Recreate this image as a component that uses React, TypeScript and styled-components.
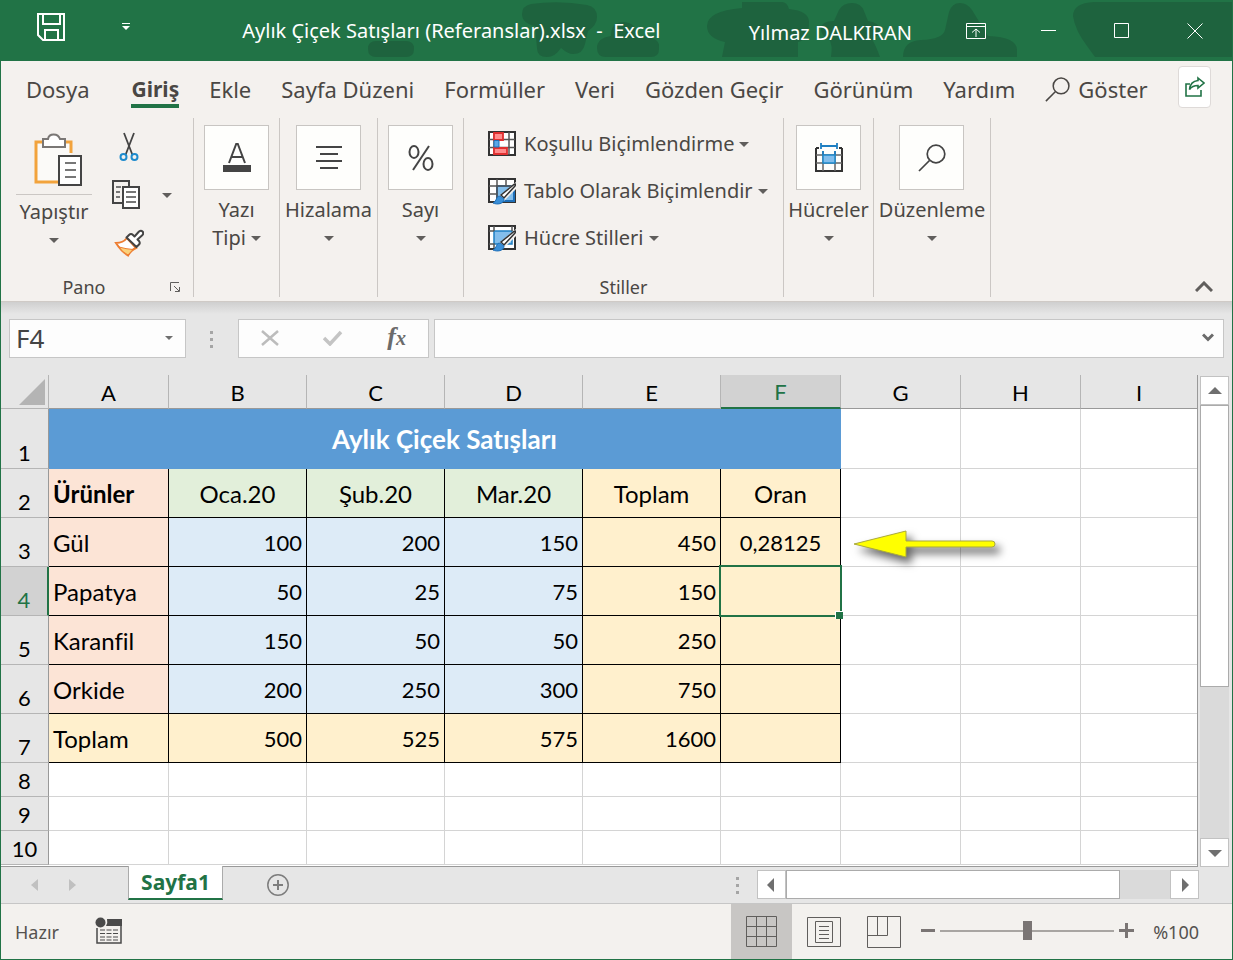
import React from "react";
import styled, { createGlobalStyle, css } from "styled-components";

const green = "#217346";
const ui = `"Noto Sans", "Open Sans", sans-serif`;
const cellFont = `Lato, "Noto Sans", sans-serif`;

const Global = createGlobalStyle`
  *, *::before, *::after { box-sizing: border-box; }
  body { margin: 0; font-family: ${ui}; color: #4a4744; background: #e6e6e6; }
  button { border: 0; padding: 0; margin: 0; background: none; font: inherit; color: inherit; cursor: pointer; }
  svg { display: block; flex: none; }
`;

const Window = styled.div`
  display: flex;
  flex-direction: column;
  min-height: 100vh;
  border: 1px solid ${green};
  border-top: 0;
`;

/* ---------- title bar ---------- */

const TitleBar = styled.header`
  position: relative;
  display: flex;
  align-items: center;
  height: 61px;
  padding-right: 1px;
  overflow: hidden;
  background: ${green};
  color: #fff;
`;

const TitleArt = styled.svg`
  position: absolute;
  top: 0;
  right: 0;
  fill: #1e633e;
`;

const TitleGroup = styled.div<{ $grow?: boolean }>`
  position: relative;
  display: flex;
  align-items: center;
  justify-content: ${(p) => (p.$grow ? "center" : "flex-start")};
  flex: ${(p) => (p.$grow ? "1" : "none")};
  white-space: pre;
  font-size: 20px;
  line-height: 28px;
`;

const QuickAccess = styled(TitleGroup)`
  gap: 56px;
  width: 153px;
  padding: 0 0 8px 35px;
`;

const User = styled(TitleGroup)`
  padding: 4px 27px 0 0;
`;

const WindowButton = styled.button`
  display: flex;
  align-items: center;
  justify-content: center;
  width: 73px;
  height: 60px;
`;

/* ---------- ribbon tabs ---------- */

const Tabs = styled.nav`
  display: flex;
  align-items: center;
  height: 57px;
  padding: 0 21px 0 25px;
  background: #f4f1ee;
  font-size: 22px;
  line-height: 30px;
  white-space: nowrap;
`;

const TabLinks = styled.div`
  display: flex;
  flex: 1;
  align-items: center;
  gap: 30px;
  padding-bottom: 1px;
`;

const Tab = styled.a<{ $active?: boolean; $first?: boolean }>`
  color: inherit;
  text-decoration: none;
  padding-top: 4px;
  border-bottom: 4px solid ${(p) => (p.$active ? green : "transparent")};
  font-size: ${(p) => (p.$active ? 21 : 22)}px;
  font-weight: ${(p) => (p.$active ? 700 : 400)};
  margin-right: ${(p) => (p.$first ? "12px" : "0")};
`;

const TellMe = styled.button`
  display: flex;
  align-items: center;
  gap: 8px;
`;

const ShareButton = styled.button`
  display: flex;
  align-items: center;
  justify-content: center;
  width: 33px;
  height: 42px;
  margin-bottom: 5px;
  background: #fff;
  border: 1px solid #dedad8;
  border-radius: 4px;
`;

/* ---------- ribbon ---------- */

const Ribbon = styled.section`
  display: flex;
  height: 184px;
  padding-bottom: 4px;
  background: #f4f1ee;
  border-bottom: 1px solid #cfcac6;
  font-size: 20px;
  line-height: 28px;
`;

const Group = styled.div<{ $width: number }>`
  display: flex;
  flex-direction: column;
  width: ${(p) => p.$width}px;
  border-right: 1px solid #cbc7c4;
`;

const GroupBody = styled.div`
  display: flex;
  flex: 1;
`;

const GroupCaption = styled.div`
  display: flex;
  align-items: center;
  justify-content: center;
  position: relative;
  height: 20px;
  padding-right: 26px;
  font-size: 18px;
  line-height: 20px;
`;

const StyleCaption = styled(GroupCaption)`
  padding-right: 0;
`;

const Launcher = styled.button`
  position: absolute;
  right: 12px;
  top: 5px;
`;

const PasteButton = styled.button`
  display: flex;
  flex-direction: column;
  align-items: center;
  width: 76px;
  margin-left: 15px;
  padding-top: 15px;
`;

const PasteLabel = styled.span`
  width: 100%;
  margin: 7px 0 12px;
  padding-top: 3px;
  border-top: 1px solid #cbc7c4;
`;

const ClipboardTools = styled.div`
  display: flex;
  flex-direction: column;
  gap: 18px;
  padding: 14px 0 0 20px;
`;

const Tool = styled.button`
  display: flex;
  align-items: center;
  gap: 22px;
  height: 30px;
`;

const BigButton = styled.button`
  display: flex;
  flex-direction: column;
  align-items: center;
  padding-top: 7px;
  white-space: nowrap;
`;

const Tile = styled.span`
  display: flex;
  align-items: center;
  justify-content: center;
  width: 65px;
  height: 65px;
  margin-bottom: 6px;
  background: #fefefc;
  border: 1px solid #c8c5c2;
`;

const LabelLine = styled.span`
  display: flex;
  align-items: center;
  gap: 5px;
  height: 28px;
`;

const CenterBody = styled(GroupBody)`
  justify-content: center;
  align-items: flex-start;
`;

const StyleList = styled.div`
  display: flex;
  flex-direction: column;
  gap: 19px;
  padding: 12px 0 0 24px;
`;

const StyleButton = styled.button`
  display: flex;
  align-items: center;
  gap: 8px;
  height: 28px;
  white-space: nowrap;
`;

const Collapse = styled.button`
  align-self: flex-end;
  margin: 0 19px 5px auto;
`;

/* ---------- formula bar ---------- */

const FormulaBar = styled.div`
  display: flex;
  align-items: center;
  height: 73px;
  padding: 0 8px;
  background: linear-gradient(#cfcfcf, #e6e6e6 12px);
`;

const boxed = css`
  display: flex;
  align-items: center;
  height: 39px;
  padding-bottom: 2px;
  background: #fdfdfd;
  border: 1px solid #c6c6c6;
`;

const NameBox = styled.div`
  ${boxed}
  width: 177px;
  padding-left: 6px;
  padding-right: 12px;
`;

const NameInput = styled.input`
  flex: 1;
  min-width: 0;
  border: 0;
  padding: 0;
  outline: 0;
  background: none;
  font: 26px/34px ${ui};
  color: #444;
`;

const Dots = styled.span`
  width: 52px;
  display: flex;
  justify-content: center;
`;

const FormulaButtons = styled.div`
  ${boxed}
  width: 191px;
  margin-right: 5px;
  justify-content: space-around;
`;

const FxButton = styled.button`
  font: italic bold 26px/30px "Liberation Serif", serif;
  color: #6b6b6b;
`;

const FxSub = styled.span`
  font-size: 20px;
`;

const FormulaField = styled.div`
  ${boxed}
  flex: 1;
  padding-right: 9px;
`;

/* ---------- sheet ---------- */

const SheetArea = styled.main`
  display: flex;
  flex: 1;
  background: #e6e6e6;
`;

const SheetPane = styled.div`
  flex: 1;
  min-width: 0;
  overflow: hidden;
  padding-bottom: 1px;
  border-right: 1px solid #999;
  border-bottom: 1px solid #999;
  background: linear-gradient(#e6e6e6 34px, #fff 34px);
`;

const Grid = styled.table`
  width: 100%;
  table-layout: fixed;
  border-collapse: separate;
  border-spacing: 0;
  font: 22px/28px ${cellFont};
  font-variant-ligatures: none;
  color: #000;
`;

const Row = styled.tr<{ $h: number }>`
  height: ${(p) => p.$h}px;
`;

const ColHead = styled.th<{ $on?: boolean }>`
  padding: 2px 0 0;
  font-weight: 400;
  border-right: 1px solid #b5b5b5;
  border-bottom: ${(p) => (p.$on ? `2px solid ${green}` : "1px solid #999")};
  background: ${(p) => (p.$on ? "#d2d2d2" : "#e6e6e6")};
  color: ${(p) => (p.$on ? green : "#000")};
  &:last-child { border-right: 0; }
`;

const Corner = styled.td`
  padding: 0 3px 3px 0;
  vertical-align: bottom;
  border-right: 1px solid #b5b5b5;
  border-bottom: 1px solid #b5b5b5;
  background: #e6e6e6;
  svg { margin-left: auto; }
`;

const RowHead = styled.th<{ $on?: boolean }>`
  padding: 0;
  vertical-align: bottom;
  text-align: center;
  font-weight: 400;
  line-height: 30px;
  border-right: ${(p) => (p.$on ? `2px solid ${green}` : "1px solid #999")};
  border-bottom: 1px solid #b5b5b5;
  background: ${(p) => (p.$on ? "#d2d2d2" : "#e6e6e6")};
  color: ${(p) => (p.$on ? green : "#000")};
`;

const fills: Record<string, string> = {
  none: "#fff",
  pink: "#fce4d6",
  green: "#e2efda",
  blue: "#ddebf7",
  yellow: "#fff0cd",
  title: "#5b9bd5",
};

const Cell = styled.td<{ $fill?: string; $align?: string; $bold?: boolean; $text?: boolean }>`
  position: relative;
  padding: 1px 4px 0;
  white-space: nowrap;
  font-size: ${(p) => (p.$text ? 24 : 22)}px;
  text-align: ${(p) => p.$align || "right"};
  font-weight: ${(p) => (p.$bold ? 700 : 400)};
  background: ${(p) => fills[p.$fill || "none"]};
  border-right: 1px solid ${(p) => (p.$fill ? "#000" : "#d4d4d4")};
  border-bottom: 1px solid ${(p) => (p.$fill ? "#000" : "#d4d4d4")};
  &:last-child { border-right: 0; }
`;

const TitleCell = styled(Cell)`
  font-size: 26px;
  color: #fff;
  border-color: #5b9bd5;
`;

const Selection = styled.span`
  position: absolute;
  inset: -2px -2px -2px -2px;
  border: 2px solid ${green};
  z-index: 1;
  &::after {
    content: "";
    position: absolute;
    right: -3px;
    bottom: -4px;
    width: 8px;
    height: 8px;
    background: ${green};
    border: 1px solid #fff;
    border-width: 1px 0 0 1px;
  }
`;

const Arrow = styled.svg`
  position: absolute;
  left: 4px;
  top: 4px;
  z-index: 2;
`;

/* ---------- scroll bars ---------- */

const ScrollBar = styled.div<{ $row?: boolean }>`
  display: flex;
  flex-direction: ${(p) => (p.$row ? "row" : "column")};
  background: #dadada;
  ${(p) => (p.$row ? "width: 442px; height: 29px;" : "width: 29px; margin: 1px 3px 0 2px;")}
`;

const ScrollButton = styled.button`
  display: flex;
  flex: none;
  align-items: center;
  justify-content: center;
  width: 29px;
  height: 29px;
  background: #fff;
  border: 1px solid #c2c2c2;
`;

const Thumb = styled.div<{ $size: number }>`
  flex: ${(p) => p.$size};
  background: #fff;
  border: 1px solid #ababab;
`;

const Track = styled.div<{ $size: number }>`
  flex: ${(p) => p.$size};
`;

/* ---------- sheet tabs and status ---------- */

const SheetTabs = styled.div`
  display: flex;
  align-items: center;
  height: 37px;
  padding: 0 33px 1px 0;
  background: #e6e6e6;
  border-bottom: 1px solid #c6c6c6;
`;

const SheetNav = styled.div`
  display: flex;
  gap: 31px;
  width: 127px;
  padding-left: 30px;
`;

const SheetTab = styled.button`
  align-self: flex-start;
  width: 95px;
  height: 34px;
  margin-top: -1px;
  background: #fff;
  border: 1px solid #ababab;
  border-width: 0 1px 2px;
  border-bottom-color: ${green};
  color: ${green};
  font-size: 21px;
  font-weight: 700;
  line-height: 32px;
`;

const AddSheet = styled.button`
  margin-left: 43px;
`;

const HDots = styled.span`
  margin: 0 17px 0 auto;
`;

const StatusBar = styled.footer`
  display: flex;
  align-items: center;
  height: 55px;
  padding: 0 33px 0 14px;
  background: #f3f1ee;
  font-size: 18px;
  line-height: 24px;
  color: #55524f;
`;

const MacroButton = styled.button`
  margin: 0 auto 2px 36px;
`;

const ViewButton = styled.button<{ $on?: boolean }>`
  display: flex;
  align-items: center;
  justify-content: center;
  width: ${(p) => (p.$on ? 61 : 60)}px;
  height: 100%;
  padding-left: ${(p) => (p.$on ? 0 : 3)}px;
  background: ${(p) => (p.$on ? "#c8c6c4" : "transparent")};
`;

const ZoomControl = styled.div`
  display: flex;
  align-items: center;
  gap: 5px;
  margin: 0 19px 2px 8px;
`;

const Slider = styled.input`
  appearance: none;
  width: 174px;
  height: 20px;
  margin: 0;
  background: linear-gradient(#a8a5a2, #a8a5a2) center / 100% 2px no-repeat;
  &::-webkit-slider-thumb {
    appearance: none;
    width: 9px;
    height: 19px;
    background: #7a7574;
  }
`;

/* ---------- icons ---------- */

const Caret = () => (
  <svg width="10" height="5" viewBox="0 0 10 5"><path d="M0 0h10L5 5z" fill="#605e5c" /></svg>
);

const Tri = ({ d, color = "#6f6f6f", w = 14, h = 14 }: { d: string; color?: string; w?: number; h?: number }) => (
  <svg width={w} height={h} viewBox={`0 0 ${w} ${h}`}><path d={d} fill={color} /></svg>
);

const DotColumn = () => (
  <svg width="4" height="18" viewBox="0 0 4 18" fill="#a5a5a5">
    <rect y="1" width="3" height="3" /><rect y="8" width="3" height="3" /><rect y="15" width="3" height="3" />
  </svg>
);

const SaveIcon = () => (
  <svg width="30" height="30" viewBox="0 0 30 30" fill="none" stroke="#fff" strokeWidth="2">
    <path d="M2 2h26v26H7l-5-5zM7 2v10h17V2M9 28V18h13v10" />
  </svg>
);

const CustomizeIcon = () => (
  <svg width="8" height="8" viewBox="0 0 8 8" fill="#fff"><path d="M0 0h8v1H0zM0 3h8L4 7z" /></svg>
);

const Lens = ({ size, color }: { size: number; color: string }) => (
  <svg width={size} height={size} viewBox="0 0 28 28" fill="none" stroke={color} strokeWidth="1.7">
    <circle cx="18" cy="10" r="8.8" /><path d="M11.500 16.500L1 27" />
  </svg>
);

const ShareIcon = () => (
  <svg width="20" height="22" viewBox="0 0 20 22" fill="none" stroke={green} strokeWidth="1.6">
    <path d="M5 8H1v12h15v-6" /><path d="M13 2l6 5-6 5V9.500C9 9.500 6.500 10.500 4.500 13.500 5 8.500 8 5 13 4.500z" />
  </svg>
);

const PasteIcon = () => (
  <svg width="58" height="54" viewBox="-8 0 58 54" fill="none">
    <path d="M38 20V9H3v40h22" stroke="#f2a33c" strokeWidth="3" fill="#fbfaf8" />
    <path d="M10 6h5c1-6 10-6 12 0h5v8H10z" fill="#fff" stroke="#7a7775" strokeWidth="2" />
    <path d="M26 23h22v29H26z" fill="#fff" stroke="#444" strokeWidth="2" />
    <path d="M32 30h11M32 37h11M32 44h11" stroke="#777" strokeWidth="2" />
  </svg>
);

const ScissorsIcon = () => (
  <svg width="34" height="30" viewBox="-4 0 34 30" fill="none">
    <path d="M8 1l8.500 22M18 1L9.500 23" stroke="#444" strokeWidth="1.800" />
    <circle cx="7.500" cy="25" r="3" stroke="#1e8bcd" strokeWidth="2" />
    <circle cx="18.500" cy="25" r="3" stroke="#1e8bcd" strokeWidth="2" />
  </svg>
);

const CopyIcon = () => (
  <svg width="28" height="30" viewBox="0 0 28 30" fill="none">
    <path d="M10 23H1V1h16v5" stroke="#444" strokeWidth="2" />
    <path d="M4 7h5M4 12h4M4 17h4" stroke="#777" strokeWidth="2" />
    <path d="M11 7h16v21H11z" fill="#fff" stroke="#444" strokeWidth="2" />
    <path d="M14 12h10M14 17h10M14 22h10" stroke="#777" strokeWidth="2" />
  </svg>
);

const BrushIcon = () => (
  <svg width="32" height="28" viewBox="0 0 32 28" fill="none">
    <path d="M4 14q7 0 11-5l9 10q-5 2-8 7.500Q9 22 4 14z" fill="#fff" stroke="#ed7d31" strokeWidth="2" />
    <path d="M7 18q7 2 14 2.500l-5 5.500q-6-3-9-8z" fill="#fbd27b" stroke="#ed7d31" strokeWidth="1" />
    <path d="M17 6q2-2 4 0l1.500 1.500L27 2.500q2-1.500 3.500 0t0 3.500L25.500 10.500 27 12q1.500 2 0 3.500l-2.500 2.500-10-9.500z" fill="#fff" stroke="#444" strokeWidth="2" strokeLinejoin="round" />
  </svg>
);

const FontIcon = () => (
  <svg width="28" height="30" viewBox="0 0 28 30" fill="none">
    <path d="M6 20L13.200 1h1.600L22 20M8.500 14h11" stroke="#444" strokeWidth="2" />
    <path d="M0 22h28v7H0z" fill="#444" />
  </svg>
);

const AlignIcon = () => (
  <svg width="26" height="26" viewBox="0 0 26 26" stroke="#444" strokeWidth="2">
    <path d="M0 2h26M4 9h18M0 16h26M4 23h18" />
  </svg>
);

const PercentIcon = () => (
  <svg width="28" height="28" viewBox="0 0 28 28" fill="none" stroke="#444" strokeWidth="2">
    <ellipse cx="7" cy="8" rx="4.500" ry="6" /><ellipse cx="21" cy="20" rx="4.500" ry="6" /><path d="M22 2L6 26" />
  </svg>
);

const CellsIcon = () => (
  <svg width="28" height="30" viewBox="0 0 28 30" fill="none">
    <path d="M1 5v23h26V5M1 5h3M27 5h-3" stroke="#333" strokeWidth="2" />
    <path d="M1 12h26M1 20h26M8 8v20M20 8v20" stroke="#666" strokeWidth="1.500" />
    <path d="M8 12h12v8H8z" fill="#83beec" stroke="#1e8bcd" strokeWidth="1.500" />
    <path d="M6 3h16M6 0v6M22 0v6M8 8v4M20 8v4" stroke="#1e7fc2" strokeWidth="1.800" />
  </svg>
);

const CondIcon = () => (
  <svg width="28" height="26" viewBox="0 0 28 26" fill="none">
    <path d="M1 1h26v23H1z" fill="#fff" stroke="#333" strokeWidth="2" />
    <path d="M1 8.500h26M1 16.500h26M6 1v23M21 1v23" stroke="#555" strokeWidth="1.500" />
    <path d="M6 2h9v7H6zM6 17h13v6H6z" fill="#ff8c8c" stroke="#e03030" strokeWidth="1.800" />
    <path d="M6 9.500h5v6.500H6z" fill="#5aa7e8" stroke="#1e6fb8" />
  </svg>
);

const TableBrush = ({ full }: { full?: boolean }) => (
  <svg width="28" height="28" viewBox="0 0 28 28" fill="none">
    <path d="M1 2h26v23H1z" fill="#fff" stroke="#333" strokeWidth="2" />
    {full ? (
      <path d="M6 7h18v13H6z" fill="#83beec" stroke="#1e7fc2" strokeWidth="1.500" />
    ) : (
      <path d="M9 9h17v15H9z" fill="#83beec" stroke="#1e6fb8" strokeWidth="2" />
    )}
    {full ? (
      <path d="M1 7h5M6 2v5M24 2v5M1 20h5v4" stroke="#555" strokeWidth="1.500" />
    ) : (
      <path d="M1 9h26M1 17h8M9 2v23M18 2v7" stroke="#555" strokeWidth="1.500" />
    )}
    <path d="M28 5L11 19l5 5 12-12z" fill="#f4f1ee" />
    <path d="M13 18L26 7.500c2-1 2 0 1 1.500L16 21z" fill="#fff" stroke="#333" strokeWidth="1.500" />
    <path d="M12 19c-4 0-3 5-7 7 4 2 11 1 11-4z" fill="#3a8fd8" stroke="#1e6fb8" />
  </svg>
);

const MacroIcon = () => (
  <svg width="27" height="27" viewBox="0 0 27 27" fill="none" stroke="#4a4a4a">
    <path d="M2 11v15h24V3" strokeWidth="1.500" />
    <path d="M12 2h15v7H11q2-3 1-7z" fill="#4a4a4a" stroke="none" /><circle cx="5.500" cy="5.500" r="5" fill="#4a4a4a" stroke="none" />
    <path d="M5 13h18M5 16.500h18M5 20h18M5 23h18" strokeWidth="1.200" strokeDasharray="5 1.500" />
  </svg>
);

/* ---------- data ---------- */

const tabs = ["Dosya", "Giriş", "Ekle", "Sayfa Düzeni", "Formüller", "Veri", "Gözden Geçir", "Görünüm", "Yardım"];
const columns = ["A", "B", "C", "D", "E", "F", "G", "H", "I"];
const widths = [48, 120, 138, 138, 138, 138, 120, 120, 120];

const products: [number, string, string[]][] = [
  [3, "Gül", ["100", "200", "150", "450", "0,28125"]],
  [4, "Papatya", ["50", "25", "75", "150", ""]],
  [5, "Karanfil", ["150", "50", "50", "250", ""]],
  [6, "Orkide", ["200", "250", "300", "750", ""]],
  [7, "Toplam", ["500", "525", "575", "1600", ""]],
];

const Blank = ({ n }: { n: number }) => (
  <>{Array.from({ length: n }, (_, i) => <Cell key={i} />)}</>
);

const Big = ({ icon, label, second }: { icon: React.ReactNode; label: string; second?: string }) => (
  <CenterBody>
    <BigButton>
      <Tile>{icon}</Tile>
      <LabelLine>{label}</LabelLine>
      <LabelLine>{second}<Caret /></LabelLine>
    </BigButton>
  </CenterBody>
);

export default function App() {
  return (
    <Window>
      <Global />
      <TitleBar>
        <TitleArt width="1233" height="61" viewBox="0 0 1233 61" aria-hidden="true">
          <path d="M377 41h30q8 0 8 8t-8 8h-30q-8 0-8-8t8-8z" />
          <path d="M532 4q28-4 56 1q10 2 10 12q0 8-9 14l-3 13q-2 10-12 10q-5 0-12-6q-6 9-14 9q-10 0-10-9l-2-22q-13-3-13-12q0-8 9-10z" />
          <path d="M612 36q0-14 12-14q13 0 14 14q22 0 22 10v3q0 8-8 8h-45q-9 0-9-9q0-10 14-12z" />
          <path d="M743 2h40q5 0 7 7q20 2 20 13q0 18-11 20v15h-76l3-15q-18-4-18-16q0-15 35-18z" />
          <path d="M840 10q4-7 13-7q9 0 12 8l4 10q12 2 12 9q0 5-8 9q4 7 8 18h-49q2-12-2-18q-8-3-8-10q0-8 13-8z" />
          <path d="M950 12q3-9 11-9q7 0 12 7l16 26q29 1 29 14v7H904q0-16 18-17q22-1 24-10z" />
          <path d="M1233 2h-138q-21 1-21 14q2 14 14 30l8 11h137z" />
        </TitleArt>
        <QuickAccess>
          <button aria-label="Kaydet"><SaveIcon /></button>
          <button aria-label="Hızlı Erişim"><CustomizeIcon /></button>
        </QuickAccess>
        <TitleGroup $grow>{"Aylık Çiçek Satışları (Referanslar).xlsx  -  Excel"}</TitleGroup>
        <User>Yılmaz DALKIRAN</User>
        <TitleGroup>
          <WindowButton aria-label="Şerit Görüntüleme">
            <svg width="20" height="16" viewBox="0 0 20 16" fill="none" stroke="#fff"><path d="M.5.5h19v15H.5zM.5 3.500h19M10 14V6M6 9.500L10 6l4 3.500" /></svg>
          </WindowButton>
          <WindowButton aria-label="Simge durumuna küçült">
            <svg width="15" height="2" viewBox="0 0 15 2"><path d="M0 0h15v1H0z" fill="#fff" /></svg>
          </WindowButton>
          <WindowButton aria-label="Ekranı kapla">
            <svg width="15" height="15" viewBox="0 0 15 15" fill="none" stroke="#fff"><path d="M.5.5h14v14H.5z" /></svg>
          </WindowButton>
          <WindowButton aria-label="Kapat">
            <svg width="16" height="16" viewBox="0 0 16 16" stroke="#fff"><path d="M.5.5l15 15M15.500.5l-15 15" /></svg>
          </WindowButton>
        </TitleGroup>
      </TitleBar>

      <Tabs>
        <TabLinks>
          {tabs.map((t, i) => (
            <Tab key={t} href="#" $active={i === 1} $first={i === 0}>{t}</Tab>
          ))}
          <TellMe><Lens size={25} color="#4a4744" />Göster</TellMe>
        </TabLinks>
        <ShareButton aria-label="Paylaş"><ShareIcon /></ShareButton>
      </Tabs>

      <Ribbon>
        <Group $width={193}>
          <GroupBody>
            <PasteButton>
              <PasteIcon />
              <PasteLabel>Yapıştır</PasteLabel>
              <Caret />
            </PasteButton>
            <ClipboardTools>
              <Tool aria-label="Kes"><ScissorsIcon /></Tool>
              <Tool aria-label="Kopyala"><CopyIcon /><Caret /></Tool>
              <Tool aria-label="Biçim Boyacısı"><BrushIcon /></Tool>
            </ClipboardTools>
          </GroupBody>
          <GroupCaption>
            Pano
            <Launcher aria-label="Pano ayarları">
              <svg width="11" height="11" viewBox="0 0 11 11" fill="none" stroke="#605e5c"><path d="M.5 9V.5H9M4 4l5 5M9.500 5v4.500H5" /></svg>
            </Launcher>
          </GroupCaption>
        </Group>
        <Group $width={86}><Big icon={<FontIcon />} label="Yazı" second="Tipi" /></Group>
        <Group $width={98}><Big icon={<AlignIcon />} label="Hizalama" /></Group>
        <Group $width={86}><Big icon={<PercentIcon />} label="Sayı" /></Group>
        <Group $width={320}>
          <GroupBody>
            <StyleList>
              <StyleButton><CondIcon /><LabelLine>Koşullu Biçimlendirme <Caret /></LabelLine></StyleButton>
              <StyleButton><TableBrush /><LabelLine>Tablo Olarak Biçimlendir <Caret /></LabelLine></StyleButton>
              <StyleButton><TableBrush full /><LabelLine>Hücre Stilleri <Caret /></LabelLine></StyleButton>
            </StyleList>
          </GroupBody>
          <StyleCaption>Stiller</StyleCaption>
        </Group>
        <Group $width={90}><Big icon={<CellsIcon />} label="Hücreler" /></Group>
        <Group $width={117}><Big icon={<Lens size={28} color="#444" />} label="Düzenleme" /></Group>
        <Collapse aria-label="Şeridi Daralt">
          <svg width="18" height="11" viewBox="0 0 18 11" fill="none" stroke="#605e5c" strokeWidth="3"><path d="M1 10l8-8 8 8" /></svg>
        </Collapse>
      </Ribbon>

      <FormulaBar>
        <NameBox>
          <NameInput aria-label="Ad Kutusu" defaultValue="F4" />
          <button aria-label="Adlar"><Tri d="M0 0h8L4 4z" w={8} h={4} /></button>
        </NameBox>
        <Dots><DotColumn /></Dots>
        <FormulaButtons>
          <button aria-label="İptal">
            <svg width="18" height="16" viewBox="0 0 18 16" stroke="#bcbcbc" strokeWidth="2.500"><path d="M1 1l16 14M17 1L1 15" /></svg>
          </button>
          <button aria-label="Gir">
            <svg width="20" height="16" viewBox="0 0 20 16" fill="none" stroke="#c4c4c4" strokeWidth="3.500"><path d="M1 8l6 6L18 2" /></svg>
          </button>
          <FxButton aria-label="İşlev Ekle">f<FxSub>x</FxSub></FxButton>
        </FormulaButtons>
        <FormulaField>
          <NameInput aria-label="Formül çubuğu" />
          <button aria-label="Genişlet">
            <svg width="12" height="9" viewBox="0 0 12 9" fill="none" stroke="#6b6b6b" strokeWidth="3"><path d="M1 1.500l5 5 5-5" /></svg>
          </button>
        </FormulaField>
      </FormulaBar>

      <SheetArea>
        <SheetPane>
          <Grid>
            <colgroup>
              {widths.map((w, i) => <col key={i} width={w} />)}
              <col />
            </colgroup>
            <thead>
              <Row $h={34}>
                <Corner><svg width="26" height="26" viewBox="0 0 26 26"><path d="M26 0v26H0z" fill="#b4b4b4" /></svg></Corner>
                {columns.map((c) => <ColHead key={c} $on={c === "F"}>{c}</ColHead>)}
              </Row>
            </thead>
            <tbody>
              <Row $h={60}>
                <RowHead>1</RowHead>
                <TitleCell colSpan={6} $fill="title" $align="center" $bold>Aylık Çiçek Satışları</TitleCell>
                <Blank n={3} />
              </Row>
              <Row $h={49}>
                <RowHead>2</RowHead>
                <Cell $fill="pink" $align="left" $bold $text>Ürünler</Cell>
                {["Oca.20", "Şub.20", "Mar.20"].map((m) => <Cell key={m} $fill="green" $align="center" $text>{m}</Cell>)}
                <Cell $fill="yellow" $align="center" $text>Toplam</Cell>
                <Cell $fill="yellow" $align="center" $text>Oran</Cell>
                <Blank n={3} />
              </Row>
              {products.map(([n, name, values]) => (
                <Row key={n} $h={49}>
                  <RowHead $on={n === 4}>{n}</RowHead>
                  <Cell $fill={n === 7 ? "yellow" : "pink"} $align="left" $text>{name}</Cell>
                  {values.map((v, i) => (
                    <Cell key={i} $fill={n === 7 || i > 2 ? "yellow" : "blue"} $align={i === 4 ? "center" : "right"}>
                      {v}
                      {n === 4 && i === 4 && <Selection />}
                    </Cell>
                  ))}
                  {n === 3 ? (
                    <>
                      <Cell>
                        <Arrow width="165" height="52" viewBox="0 0 165 52" aria-hidden="true">
                          <path
                            d="M9 22L61 9v10h86q3 0 3 3t-3 3H61v10z"
                            fill="#ffff00"
                            stroke="#a9a93c"
                            style={{ filter: "drop-shadow(5px 6px 4px rgba(0,0,0,.6))" }}
                          />
                        </Arrow>
                      </Cell>
                      <Blank n={2} />
                    </>
                  ) : (
                    <Blank n={3} />
                  )}
                </Row>
              ))}
              {[8, 9, 10].map((n) => (
                <Row key={n} $h={34}><RowHead>{n}</RowHead><Blank n={9} /></Row>
              ))}
            </tbody>
          </Grid>
        </SheetPane>
        <ScrollBar>
          <ScrollButton aria-label="Yukarı"><Tri d="M0 10L7 3l7 7z" /></ScrollButton>
          <Thumb $size={65} />
          <Track $size={35} />
          <ScrollButton aria-label="Aşağı"><Tri d="M0 4l7 7 7-7z" /></ScrollButton>
        </ScrollBar>
      </SheetArea>

      <SheetTabs>
        <SheetNav>
          <button aria-label="Önceki sayfa"><Tri d="M7 0v12L0 6z" w={7} h={12} color="#c0c0c0" /></button>
          <button aria-label="Sonraki sayfa"><Tri d="M0 0v12l7-6z" w={7} h={12} color="#c0c0c0" /></button>
        </SheetNav>
        <SheetTab>Sayfa1</SheetTab>
        <AddSheet aria-label="Yeni sayfa">
          <svg width="24" height="24" viewBox="0 0 24 24" fill="none" stroke="#7d7d7d"><circle cx="12" cy="12" r="10.200" strokeWidth="1.500" /><path d="M7 12h10M12 7v10" strokeWidth="2" /></svg>
        </AddSheet>
        <HDots><DotColumn /></HDots>
        <ScrollBar $row>
          <ScrollButton aria-label="Sola"><Tri d="M9 0v14L2 7z" /></ScrollButton>
          <Thumb $size={87} />
          <Track $size={13} />
          <ScrollButton aria-label="Sağa"><Tri d="M4 0v14l7-7z" /></ScrollButton>
        </ScrollBar>
      </SheetTabs>

      <StatusBar>
        Hazır
        <MacroButton aria-label="Makro Kaydet"><MacroIcon /></MacroButton>
        <ViewButton $on aria-label="Normal">
          <svg width="31" height="31" viewBox="0 0 31 31" fill="none" stroke="#605e5c"><path d="M.5.5h30v30H.5zM10.500.5v30M20.500.5v30M.5 10.500h30M.5 20.500h30" /></svg>
        </ViewButton>
        <ViewButton aria-label="Sayfa Düzeni">
          <svg width="34" height="30" viewBox="0 0 34 30" fill="none" stroke="#605e5c"><path d="M.5.5h33v29H.5zM8.500 4.500h17v21h-17zM12 9.500h10M12 13.500h10M12 17.500h10M12 21.500h10" /></svg>
        </ViewButton>
        <ViewButton aria-label="Sayfa Sonu Önizleme">
          <svg width="34" height="32" viewBox="0 0 34 32" fill="none" stroke="#605e5c"><path d="M.5.5h33v31H.5zM10.500.5v19M20.500.5v19M.5 19.500h20" /></svg>
        </ViewButton>
        <ZoomControl>
          <button aria-label="Uzaklaştır"><svg width="15" height="15" viewBox="0 0 15 15"><path d="M1 6h14v3H1z" fill="#7a7574" /></svg></button>
          <Slider type="range" aria-label="Yakınlaştırma" />
          <button aria-label="Yakınlaştır"><svg width="15" height="15" viewBox="0 0 15 15"><path d="M0 6h6V0h3v6h6v3H9v6H6V9H0z" fill="#7a7574" /></svg></button>
        </ZoomControl>
        %100
      </StatusBar>
    </Window>
  );
}
